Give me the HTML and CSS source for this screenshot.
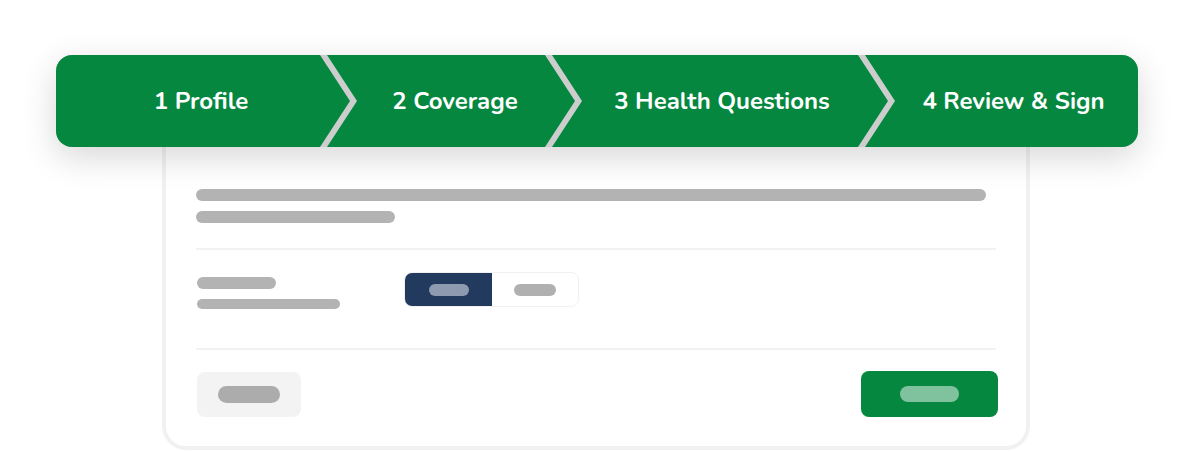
FILE: index.html
```html
<!DOCTYPE html>
<html lang="en">
<head>
<meta charset="utf-8">
<title>Application steps</title>
<link rel="stylesheet" href="styles.css">
</head>
<body>
<div class="stage">
  <nav class="stepper">
    <div class="step step-first">1 Profile</div>
    <div class="step step-mid">2 Coverage</div>
    <div class="step step-mid">3 Health Questions</div>
    <div class="step step-last">4 Review &amp; Sign</div>
  </nav>
  <section class="card">
    <div class="sk sk-title"></div>
    <div class="sk sk-sub"></div>
    <hr class="divider divider-top">
    <div class="row">
      <div class="label">
        <div class="sk sk-label"></div>
        <div class="sk sk-help"></div>
      </div>
      <div class="toggle">
        <div class="opt opt-on"><span class="pill pill-on"></span></div>
        <div class="opt opt-off"><span class="pill pill-off"></span></div>
      </div>
    </div>
    <hr class="divider divider-bottom">
    <div class="actions">
      <div class="btn btn-back"><span class="pill pill-back"></span></div>
      <div class="btn btn-next"><span class="pill pill-next"></span></div>
    </div>
  </section>
</div>
</body>
</html>
```

FILE: styles.css
```css
* { box-sizing: border-box; }
html, body { margin: 0; padding: 0; background: #ffffff; }
body { font-family: "Nunito", "Open Sans", "Noto Sans", sans-serif; }

.stage {
  width: 1204px;
  height: 452px;
  padding: 55px 0 0 56px;
  overflow: hidden;
}

.stepper {
  position: relative;
  z-index: 2;
  display: flex;
  width: 1082px;
  height: 92px;
  background: #cdcdcd;
  border-radius: 16px;
  overflow: hidden;
  box-shadow: 0 10px 34px rgba(0, 0, 0, 0.16);
}

.step {
  display: flex;
  align-items: center;
  justify-content: center;
  height: 100%;
  background: #06873f;
  color: #ffffff;
  font-size: 24px;
  font-weight: 700;
  white-space: nowrap;
}

.step-first {
  width: 294px;
  padding-right: 4px;
  clip-path: polygon(0 0, calc(100% - 30px) 0, 100% 50%, calc(100% - 30px) 100%, 0 100%);
}
.step-mid {
  margin-left: -23px;
  clip-path: polygon(0 0, calc(100% - 30px) 0, 100% 50%, calc(100% - 30px) 100%, 0 100%, 30px 50%);
}
.step-mid:nth-child(2) { width: 248px; padding-left: 8px; }
.step-mid:nth-child(3) { width: 336px; padding-left: 4px; }
.step-last {
  margin-left: -23px;
  flex: 1;
  padding-left: 24px;
  clip-path: polygon(0 0, 100% 0, 100% 100%, 0 100%, 30px 50%);
}

.card {
  position: relative;
  z-index: 1;
  width: 868px;
  margin: -40px 0 0 106px;
  padding: 78px 30px 29px;
  background: #ffffff;
  border: 4px solid #f1f1f1;
  border-radius: 24px;
}

.sk { background: #b3b3b3; border-radius: 6px; }
.sk-title { width: 790px; height: 12px; }
.sk-sub { width: 199px; height: 12px; margin-top: 10px; }

.divider {
  border: 0;
  height: 2px;
  margin: 0;
  background: #f2f2f2;
}
.divider-top { margin-top: 25px; }
.divider-bottom { margin-top: 39px; }

.row {
  display: flex;
  align-items: flex-start;
  margin-top: 22px;
}
.label {
  width: 208px;
  padding: 5px 0 0 1px;
}
.sk-label { width: 79px; height: 12px; }
.sk-help { width: 143px; height: 10px; margin-top: 10px; border-radius: 5px; }

.toggle {
  display: flex;
  width: 175px;
  height: 35px;
  border: 1px solid #f0f0f0;
  border-radius: 8px;
  overflow: hidden;
}
.opt {
  display: flex;
  align-items: center;
  justify-content: center;
  flex: 1;
}
.opt-on { background: #223a5e; flex: 0 0 87px; }
.opt-off { background: #ffffff; }
.pill { display: block; border-radius: 9px; }
.pill-on { width: 40px; height: 12px; background: #8e9ab0; }
.pill-off { width: 42px; height: 12px; background: #b0b0b0; }

.actions {
  display: flex;
  justify-content: space-between;
  align-items: center;
  margin-top: 21px;
  padding-left: 1px;
}
.btn {
  display: flex;
  align-items: center;
  justify-content: center;
  border-radius: 8px;
}
.btn-back { width: 104px; height: 45px; background: #f3f3f3; }
.btn-next { width: 137px; height: 46px; background: #06873f; margin-right: -2px; }
.pill-back { width: 62px; height: 17px; background: #acacac; }
.pill-next { width: 59px; height: 16px; background: #80c29d; }
```
